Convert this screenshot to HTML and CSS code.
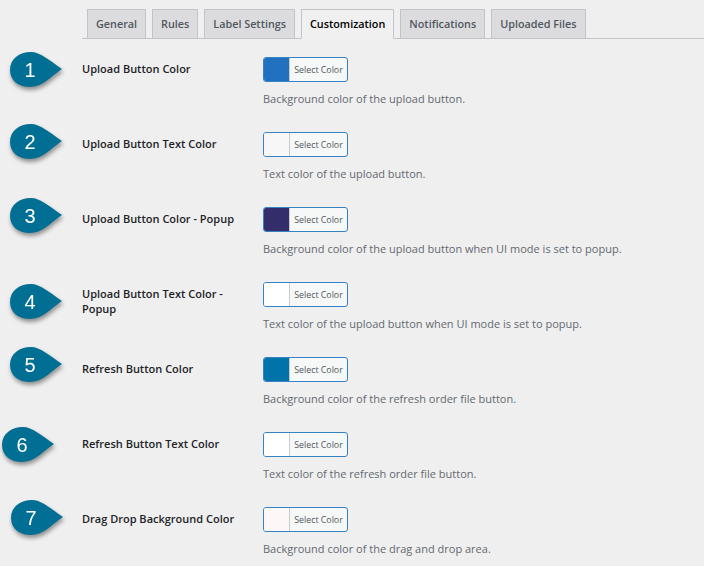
FILE: index.html
```html
<!DOCTYPE html>
<html lang="en">
<head>
  <meta charset="UTF-8">
  <title>Customization</title>
  <link rel="stylesheet" href="styles.css">
</head>
<body>
  <div class="container">
    <nav class="tabs">
      <a class="tab">General</a>
      <a class="tab">Rules</a>
      <a class="tab">Label Settings</a>
      <a class="tab active">Customization</a>
      <a class="tab">Notifications</a>
      <a class="tab">Uploaded Files</a>
    </nav>

    <div class="row">
      <svg class="marker m1" viewBox="0 0 60 44"><path d="M0 18C0 7 9 0 21 0C30 0 39 8 52 17C39 26 32 35 20 35C9 35 0 29 0 18Z"/><text x="20" y="25">1</text></svg>
      <div class="name">Upload Button Color</div>
      <div class="field">
        <div class="picker"><span class="swatch" style="background:#2271c1"></span><span class="pick-text">Select Color</span></div>
        <p class="desc">Background color of the upload button.</p>
      </div>
    </div>

    <div class="row">
      <svg class="marker m2" viewBox="0 0 60 44"><path d="M0 18C0 7 9 0 21 0C30 0 39 8 52 17C39 26 32 35 20 35C9 35 0 29 0 18Z"/><text x="20" y="25">2</text></svg>
      <div class="name">Upload Button Text Color</div>
      <div class="field">
        <div class="picker"><span class="swatch" style="background:#f7f7f7"></span><span class="pick-text">Select Color</span></div>
        <p class="desc">Text color of the upload button.</p>
      </div>
    </div>

    <div class="row">
      <svg class="marker m3" viewBox="0 0 60 44"><path d="M0 18C0 7 9 0 21 0C30 0 39 8 52 17C39 26 32 35 20 35C9 35 0 29 0 18Z"/><text x="20" y="25">3</text></svg>
      <div class="name">Upload Button Color - Popup</div>
      <div class="field">
        <div class="picker"><span class="swatch" style="background:#332e6b"></span><span class="pick-text">Select Color</span></div>
        <p class="desc">Background color of the upload button when UI mode is set to popup.</p>
      </div>
    </div>

    <div class="row">
      <svg class="marker m4" viewBox="0 0 60 44"><path d="M0 18C0 7 9 0 21 0C30 0 39 8 52 17C39 26 32 35 20 35C9 35 0 29 0 18Z"/><text x="20" y="25">4</text></svg>
      <div class="name">Upload Button Text Color - Popup</div>
      <div class="field">
        <div class="picker"><span class="swatch" style="background:#ffffff"></span><span class="pick-text">Select Color</span></div>
        <p class="desc">Text color of the upload button when UI mode is set to popup.</p>
      </div>
    </div>

    <div class="row">
      <svg class="marker m5" viewBox="0 0 60 44"><path d="M0 18C0 7 9 0 21 0C30 0 39 8 52 17C39 26 32 35 20 35C9 35 0 29 0 18Z"/><text x="20" y="25">5</text></svg>
      <div class="name">Refresh Button Color</div>
      <div class="field">
        <div class="picker"><span class="swatch" style="background:#0073aa"></span><span class="pick-text">Select Color</span></div>
        <p class="desc">Background color of the refresh order file button.</p>
      </div>
    </div>

    <div class="row">
      <svg class="marker m6" viewBox="0 0 60 44"><path d="M0 18C0 7 9 0 21 0C30 0 39 8 52 17C39 26 32 35 20 35C9 35 0 29 0 18Z"/><text x="20" y="25">6</text></svg>
      <div class="name">Refresh Button Text Color</div>
      <div class="field">
        <div class="picker"><span class="swatch" style="background:#ffffff"></span><span class="pick-text">Select Color</span></div>
        <p class="desc">Text color of the refresh order file button.</p>
      </div>
    </div>

    <div class="row">
      <svg class="marker m7" viewBox="0 0 60 44"><path d="M0 18C0 7 9 0 21 0C30 0 39 8 52 17C39 26 32 35 20 35C9 35 0 29 0 18Z"/><text x="20" y="25">7</text></svg>
      <div class="name">Drag Drop Background Color</div>
      <div class="field">
        <div class="picker"><span class="swatch" style="background:#fdf7f7"></span><span class="pick-text">Select Color</span></div>
        <p class="desc">Background color of the drag and drop area.</p>
      </div>
    </div>
  </div>
</body>
</html>
```

FILE: styles.css
```css
html, body {
  height: 100%;
}

body {
  font-family: 'Open Sans', sans-serif;
  background: #efefef;
  color: #3c434a;
  margin: 0;
  overflow: hidden;
}

.container {
  padding: 9px 0 0 82px;
}

.tabs {
  display: flex;
  gap: 6px;
  height: 29px;
  padding-left: 5px;
  border-bottom: 1px solid #c3c4c7;
  margin-bottom: 18px;
}

.tab {
  box-sizing: border-box;
  height: 29px;
  padding: 0 8px;
  background: #dcdcde;
  border: 1px solid #c3c4c7;
  border-bottom: none;
  color: #50575e;
  font-size: 10.8px;
  font-weight: 600;
  line-height: 28px;
  white-space: nowrap;
}

.tab.active {
  height: 30px;
  background: #f0f0f1;
  border-bottom: 1px solid #f0f0f1;
  color: #000;
}

.row {
  display: flex;
  height: 75px;
}

.name {
  width: 181px;
  padding: 4px 20px 0 0;
  box-sizing: border-box;
  color: #1d2327;
  font-size: 11px;
  font-weight: 600;
  line-height: 15px;
}

.field {
  flex: 1;
}

.picker {
  display: flex;
  box-sizing: border-box;
  width: 85px;
  height: 25px;
  background: #f6f7f7;
  border: 1px solid #3582c4;
  border-radius: 3px;
  overflow: hidden;
}

.swatch {
  width: 25px;
  border-right: 1px solid #c9cccf;
}

.pick-text {
  flex: 1;
  color: #50575e;
  font-size: 8.8px;
  line-height: 24px;
  text-align: center;
}

.desc {
  margin: 9px 0 0;
  color: #646970;
  font-size: 11px;
  line-height: 16px;
  white-space: nowrap;
}

/* numbered callouts drawn over the screenshot */
.marker {
  position: absolute;
  left: 10px;
  width: 60px;
  height: 44px;
  overflow: visible;
  filter: drop-shadow(1px 3px 2px rgba(0,0,0,0.4));
}

.marker path {
  fill: #016f94;
}

.marker text {
  fill: #fff;
  font-family: 'Liberation Sans', sans-serif;
  font-size: 20px;
  text-anchor: middle;
}

.m1 { top: 52px; }
.m2 { top: 124px; }
.m3 { top: 198px; }
.m4 { top: 284px; }
.m5 { top: 347px; }
.m6 { top: 427px; left: 2px; }
.m7 { top: 500px; left: 11px; }
```
